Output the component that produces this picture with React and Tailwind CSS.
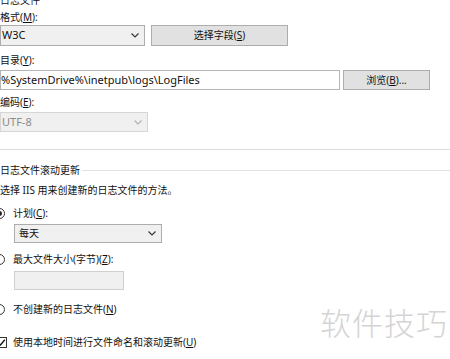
const Chevron = ({ color = "#333" }) => (
  <svg width="8" height="5" viewBox="0 0 8 5" className="shrink-0">
    <path d="M0.5 0.5 L4 4 L7.5 0.5" fill="none" stroke={color} strokeWidth="1.1" />
  </svg>
);

const Radio = ({ checked }) => (
  <span className="ml-[-6px] flex h-[11px] w-[11px] shrink-0 items-center justify-center rounded-full border border-[#333] bg-white">
    {checked && <span className="h-[5px] w-[5px] rounded-full bg-[#222]" />}
  </span>
);

const Label = ({ text, mnemonic, suffix = ":", className = "" }) => (
  <div className={`h-[16px] leading-[16px] ${className}`}>
    {text}(<span className="underline">{mnemonic}</span>){suffix}
  </div>
);

export default function App() {
  return (
    <div className="relative h-[359px] w-[450px] overflow-hidden bg-white font-['Noto_Sans','Noto_Sans_CJK_SC',sans-serif] text-[10px] text-[#111]">
      <div className="flex flex-col">
        <div className="mt-[-8px] h-[16px] leading-[16px]">日志文件</div>
        <Label className="mt-[1px]" text="格式" mnemonic="M" />

        <div className="flex h-[21px] items-stretch">
          <div className="flex w-[145px] items-center justify-between border border-[#adadad] bg-[#f0f0f0] pl-[1px] pr-[5px] text-[11px]">
            <span>W3C</span>
            <Chevron />
          </div>
          <button className="ml-[6px] w-[137px] border border-[#adadad] bg-[#e1e1e1] text-[10px]">
            选择字段(<span className="underline">S</span>)
          </button>
        </div>

        <Label className="mt-[6px]" text="目录" mnemonic="Y" />
        <div className="mt-[2px] flex h-[20px] items-stretch">
          <div className="flex w-[340px] items-center border border-[#b5b5b5] bg-white text-[11px]">
            %SystemDrive%\inetpub\logs\LogFiles
          </div>
          <button className="ml-[3px] w-[87px] border border-[#adadad] bg-[#e1e1e1] text-[10px]">
            浏览(<span className="underline">B</span>)...
          </button>
        </div>

        <Label className="mt-[4px]" text="编码" mnemonic="E" />
        <div className="mt-[2px] flex h-[20px] w-[148px] items-center justify-between border border-[#d6d6d6] bg-[#f0f0f0] pl-[1px] pr-[5px] text-[11px] text-[#8a8a8a]">
          <span>UTF-8</span>
          <Chevron color="#b0b0b0" />
        </div>

        <div className="mt-[17px] h-px w-full bg-[#dcdcdc]" />

        <div className="mt-[12px] flex h-[16px] items-center">
          <span className="leading-[16px]">日志文件滚动更新</span>
          <span className="ml-[2px] h-px flex-1 bg-[#e3e3e3]" />
        </div>
        <div className="mt-[4px] h-[16px] leading-[16px]">选择 IIS 用来创建新的日志文件的方法。</div>

        <div className="mt-[7px] flex h-[16px] items-center">
          <Radio checked />
          <Label className="ml-[8px]" text="计划" mnemonic="C" />
        </div>
        <div className="ml-[14px] mt-[3px] flex h-[19px] w-[148px] items-center justify-between border border-[#adadad] bg-[#f0f0f0] pl-[4px] pr-[5px]">
          <span>每天</span>
          <Chevron />
        </div>

        <div className="mt-[8px] flex h-[16px] items-center">
          <Radio />
          <Label className="ml-[8px]" text="最大文件大小(字节)" mnemonic="Z" />
        </div>
        <div className="ml-[14px] mt-[4px] h-[19px] w-[110px] border border-[#cfcfcf] bg-[#f0f0f0]" />

        <div className="mt-[11px] flex h-[16px] items-center">
          <Radio />
          <Label className="ml-[8px]" text="不创建新的日志文件" mnemonic="N" suffix="" />
        </div>

        <div className="mt-[17px] flex h-[16px] items-center">
          <span className="ml-[-4px] flex h-[11px] w-[11px] shrink-0 items-center justify-center border border-[#333] bg-white">
            <svg width="9" height="9" viewBox="0 0 9 9">
              <path d="M1.2 4.6 L3.5 6.9 L7.8 1.8" fill="none" stroke="#111" strokeWidth="1.4" />
            </svg>
          </span>
          <Label className="ml-[6px]" text="使用本地时间进行文件命名和滚动更新" mnemonic="U" suffix="" />
        </div>
      </div>

      <div className="pointer-events-none absolute left-[320px] top-[302px] text-[31px] font-light leading-[40px] tracking-[1px] text-[#d4d4d4] font-['Noto_Sans_CJK_SC',sans-serif]">
        软件技巧
      </div>
    </div>
  );
}
